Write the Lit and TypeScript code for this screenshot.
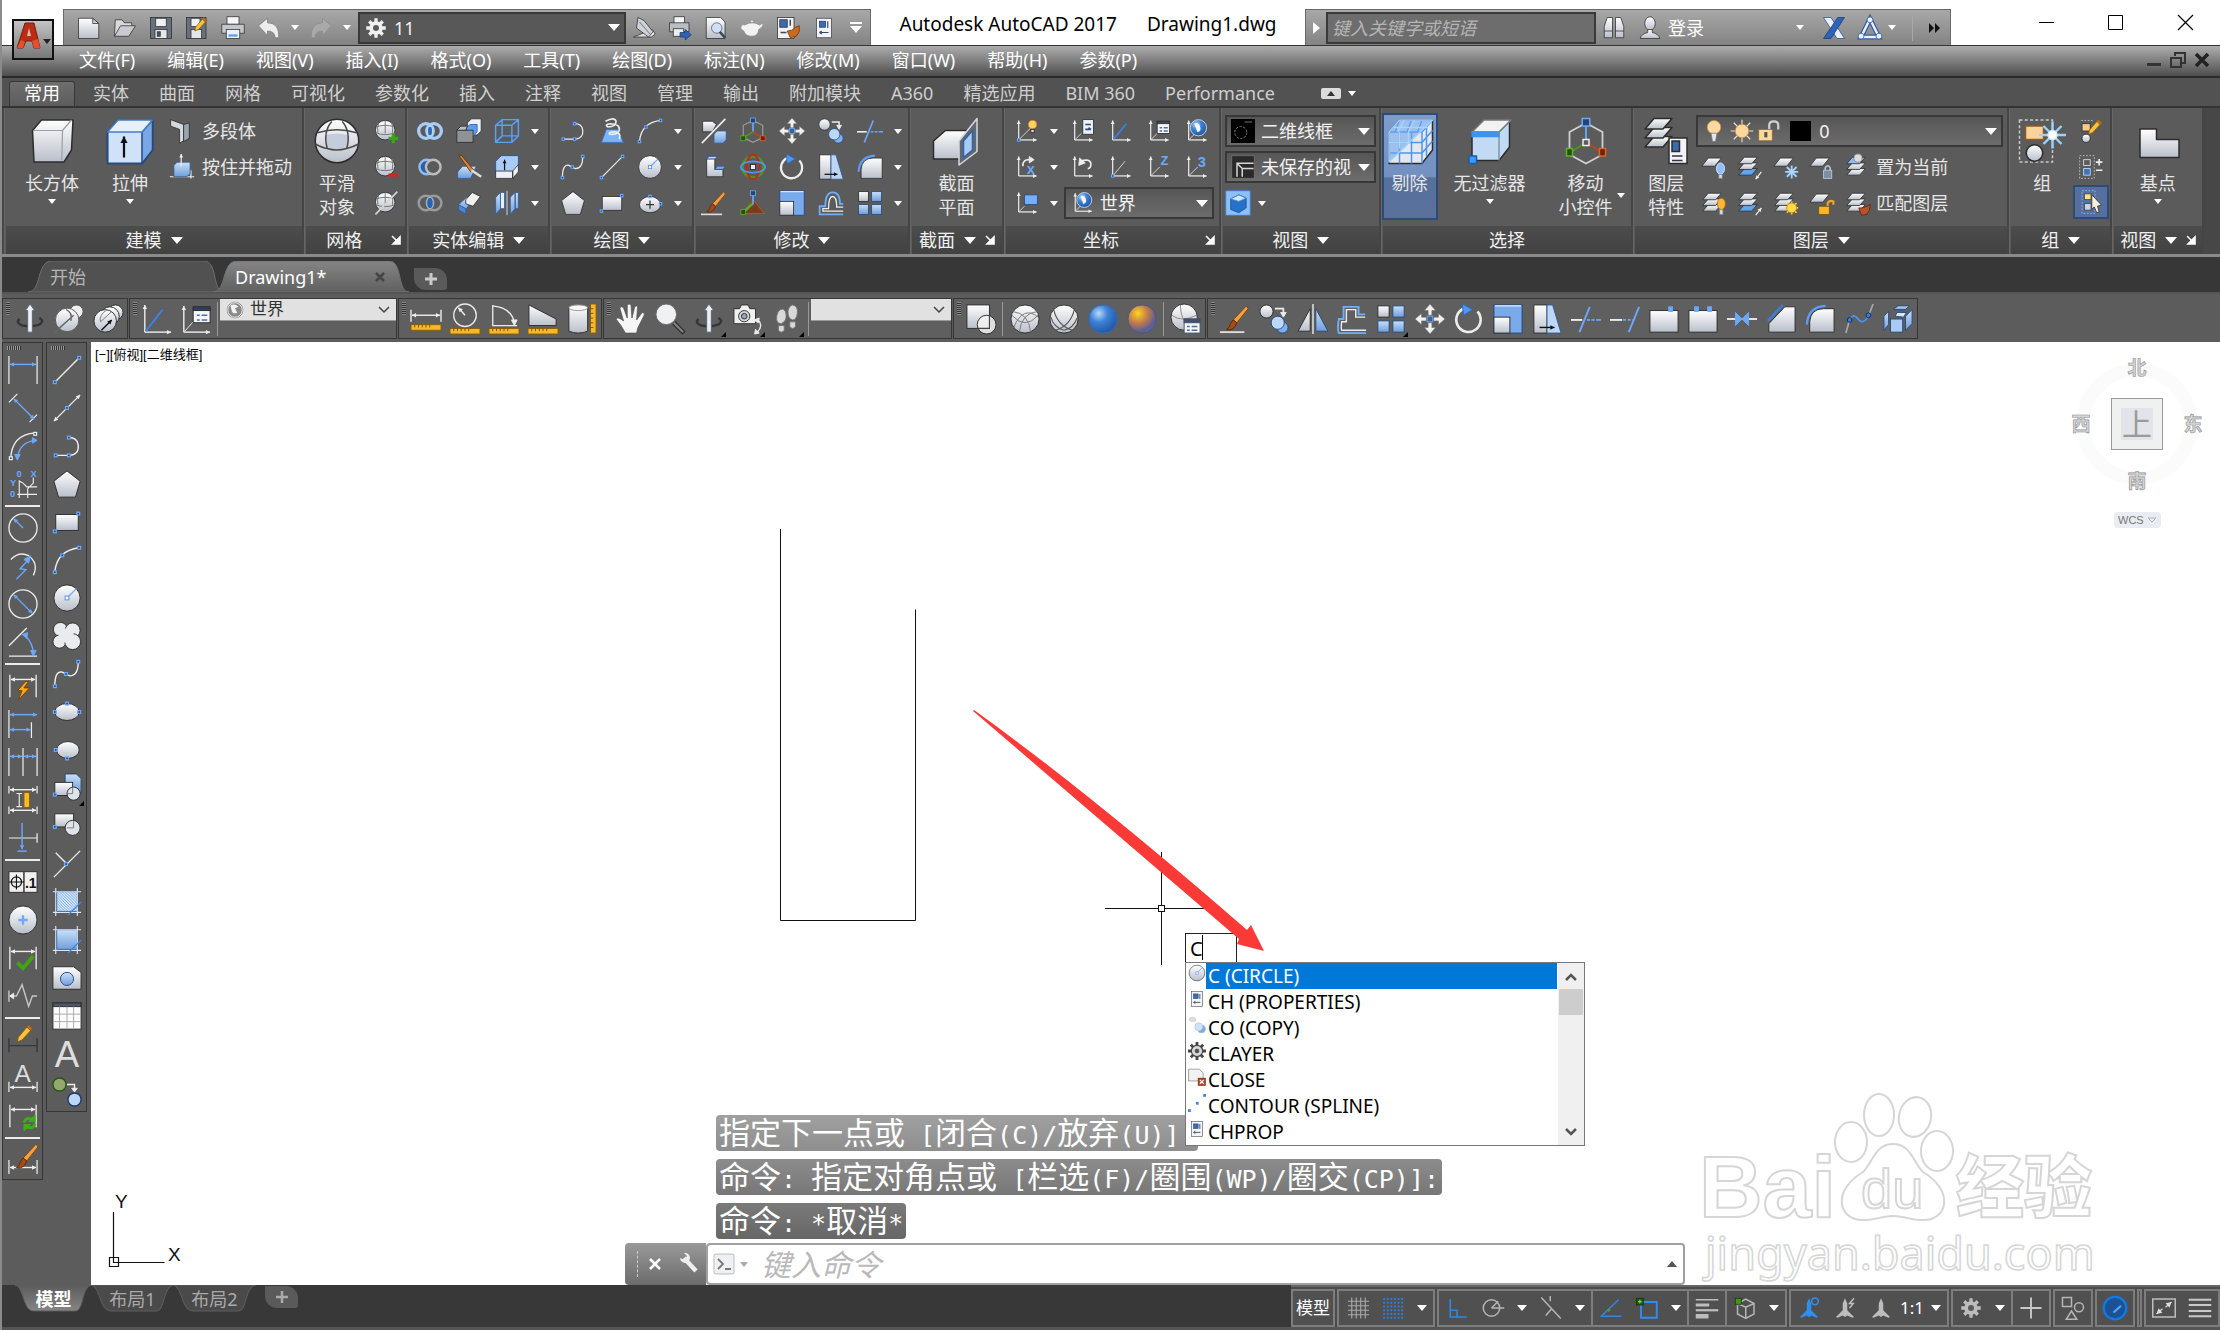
import { LitElement, html, svg, css, nothing } from "lit";
import type { SVGTemplateResult, TemplateResult } from "lit";
import { customElement, state } from "lit/decorators.js";
import { classMap } from "lit/directives/class-map.js";

/* ---------- drawing helpers (icons use a 32 x 32 grid) ---------- */
const W = "url(#gw)";
const B = "url(#gb)";
const K = "#2c2c2c";
const BL = "#6aa9ff";
const LT = "#ededed";
type S = SVGTemplateResult;

const L = (d: string, c = LT, w = 1.5): S =>
  svg`<path d=${d} fill="none" stroke=${c} stroke-width=${w}/>`;
const F = (d: string, f: string = W, s: string = K, w = 1): S =>
  svg`<path d=${d} fill=${f} stroke=${s} stroke-width=${w} stroke-linejoin="round"/>`;
const R = (x: number, y: number, w: number, h: number, f: string = W, s: string = K): S =>
  svg`<rect x=${x} y=${y} width=${w} height=${h} fill=${f} stroke=${s}/>`;
const C = (x: number, y: number, r: number, f: string = W, s: string = K, w = 1): S =>
  svg`<circle cx=${x} cy=${y} r=${r} fill=${f} stroke=${s} stroke-width=${w}/>`;
const E = (x: number, y: number, rx: number, ry: number, f: string = W, s: string = K): S =>
  svg`<ellipse cx=${x} cy=${y} rx=${rx} ry=${ry} fill=${f} stroke=${s}/>`;
const N = (x: number, y: number, c = BL): S =>
  svg`<rect x=${x - 1.5} y=${y - 1.5} width="3" height="3" fill="#23456f" stroke=${c} stroke-width="1.3"/>`;
const T = (x: number, y: number, t: string, size: number, c = BL, weight = 700): S =>
  svg`<text x=${x} y=${y} font-size=${size} fill=${c} font-family="Liberation Sans, sans-serif" font-weight=${weight}>${t}</text>`;
const A = (x1: number, y1: number, x2: number, y2: number, c = BL, both = true, s = 5): S => {
  const head = (x: number, y: number, t: number) =>
    `M${x} ${y}L${x - s * Math.cos(t - 0.5)} ${y - s * Math.sin(t - 0.5)}L${x - s * Math.cos(t + 0.5)} ${y - s * Math.sin(t + 0.5)}Z`;
  const a = Math.atan2(y2 - y1, x2 - x1);
  return svg`<path d=${`M${x1} ${y1}L${x2} ${y2}`} stroke=${c} stroke-width="1.5"/><path fill=${c} d=${head(x2, y2, a) + (both ? head(x1, y1, a + Math.PI) : "")}/>`;
};
const page = "M6 3h14l6 6v20h-20z";
const axes = svg`${A(7, 27, 7, 3, LT, false)}${A(7, 27, 29, 27, LT, false)}`;
const globe = (x: number, y: number, r: number): S => svg`${C(x, y, r, "url(#gs)", "#dfe8f5")}
  <path d=${`M${x - r / 2} ${y - r / 2}q${r / 2} ${-r / 4} ${r * 0.7} ${r / 3}t${-r / 3} ${r * 0.7}z`} fill="#f4f6f8"/>`;
const mesh = svg`${C(15, 15, 12)}${L("M15 3v16M7 6q-2 6-1 12M23 6q2 6 1 12M4 11q11-4 22 0M3 18q12 5 24 0", "#6c6c6c", 1.1)}`;
const brush = svg`${F("M28 2l2 3-12 15-4-3z", "#f0a040", "#7a4312")}${F("M14 17l4 3-2 4q-4 5-9 3 4-2 4-6z", "#a84a14", "#5a2808")}`;
const pencil = svg`${F("M25 2l4 4-11 12-5 2 1-5z", "#f7c33c", "#8a5a10")}${F("M25 2l4 4-2 2-4-4z", "#c9682a", "#8a5a10")}`;
const hdim = svg`${L("M2 4v24M30 4v24", LT, 1.4)}${A(3, 9, 29, 9, LT)}`;
const prop = svg`${R(6, 3, 20, 26, "#f2f4f7", "#3c4048")}${R(10, 7, 8, 8, "#3b6ab0", "#1d3d75")}${L("M21 7v9M10 22h12M10 22l3-2M10 22l3 2", "#3a4a5e", 1.6)}`;
const ruler = (x: number, y: number, w: number) => svg`${R(x, y, w, 6, "#f4b92f", "#8a5c00")}${L(`M${x + 4} ${y}v3M${x + 8} ${y}v3M${x + 12} ${y}v3M${x + 16} ${y}v3M${x + 20} ${y}v3`, "#7a5000", 1)}`;
const sheets = (top: string, bot: string) => svg`${F("M9 18h16l-7 8h-16z", bot)}${F("M9 11h16l-7 8h-16z", W)}${F("M9 4h16l-7 8h-16z", top)}`;
const sheet = F("M9 5h16l-8 10h-16z");
const gear = (f: string) => svg`<g stroke=${f} stroke-width="4.4"><path d="M16 3v26M3 16h26M7 7l18 18M25 7l-18 18"/></g>
  <circle cx="16" cy="16" r="9" fill=${f}/><circle cx="16" cy="16" r="4" fill="#5a5a5a"/>`;
const cube = (f: string) => svg`${F("M4 10l8-7h17v17l-7 9h-18z", f)}${L("M4 10h18v19M22 10l7-7", "#8292a6", 1)}`;
const orbit = svg`${L("M5 16q-5 4 3 7 9 2 18-1 6-4 0-7", "#32373e", 2.6)}${F("M16 0l5 7h-2.500v23h-5v-23h-2.500z", "#eceff5", "#596270")}`;
const person = (f: string) => svg`<path fill=${f} d="M16 3l3 7 0 9 9 9-2 1-7-3-3 2-3-2-7 3-2-1 9-9 0-9z"/>`;

const I: Record<string, S> = {
  new: svg`${F("M2 3h19l8 7v20h-27z")}${F("M21 3l8 7h-8z", "#cfd3d8")}`,
  open: svg`${F("M2 27l1-22h9l3 4h10v5", "#dadada")}${F("M2 27l8-14h20l-9 14z", "#c8ccd0")}`,
  save: svg`${R(2, 2, 28, 28, "#69717f")}${R(9, 3, 14, 11, "#eef0f2")}${R(8, 18, 16, 12, "#e4e6ea")}${R(11, 21, 4, 6, "#4b5464")}`,
  saveas: svg`${R(2, 2, 26, 28, "#69717f")}${R(8, 3, 12, 11, "#eef0f2")}${R(8, 18, 14, 12, "#e4e6ea")}${pencil}`,
  plot: svg`${R(8, 1, 16, 10, "#f6f6f6")}${F("M1 11h30v12h-30z", "#c4c8ce")}${R(7, 18, 18, 12, "#e9f1fb")}${L("M10 26h12", "#5d9be8", 3)}`,
  publish: svg`${R(8, 1, 14, 10, "#f6f6f6")}${F("M2 9h26v12h-26z", "#b9bdc4")}${R(7, 17, 14, 10, "#eee")}${F("M16 22h7v-4l8 7-8 7v-4h-7z", "#2f62b4", "#173c78")}`,
  undo: svg`${F("M2 13l12-10v6q16 0 15 20h-5q0-9-10-9v6z", "#ededed", "#777")}`,
  redo: svg`${F("M30 13l-12-10v6q-16 0-15 20h5q0-9 10-9v6z", "#a9a9a9", "#8a8a8a")}`,
  gear: gear("#f0f0f0"),
  sheetset: svg`${F("M2 28h24l5-4-4-6z", "#e2e2e2")}${F("M8 2l8 4 12 15-6 7-16-12z", "#cfd3d8")}${L("M10 8l14 16", "#7d838c", 1.5)}`,
  preview: svg`${F("M3 2h19l6 6v22h-25z")}${C(17, 16, 7, "#cfe0f6", "#556")}${L("M21 21l7 8", "#3d4755", 3.5)}`,
  teapot: svg`${F("M6 12q11-6 20 0l5-3q1 5-6 9-1 9-9 9-9 0-11-7-6-3-3-7 2-3 4-1z", "#f2f2f2", "#888")}${C(16, 7, 2, "#eee", "#888")}`,
  match: svg`${R(2, 2, 22, 28, "#f0f2f5")}${R(5, 5, 10, 10, "#3b6ab0")}${L("M6 22h8M19 5v8", "#445", 2)}${F("M31 13l-5 2-5 4-6 1 4 9 8-2 4-6z", "#c96a1c", "#6e3006")}`,
  prop,
  binoc: svg`${F("M3 29v-15l4-12h7v27z")}${F("M29 29v-15l-4-12h-7v27z")}${L("M3 20h11M18 20h11", K, 1)}`,
  user: svg`${E(16, 10, 7, 9)}${F("M3 30q1-6 10-8v-4h6v4q9 2 10 8z")}`,
  xch: svg`${F("M2 2h10l18 28h-10z", "#e8effa", "#2a4f8c")}${F("M30 2h-9l-19 28h10z", "#2f63b8", "#1c3c74")}`,
  a360: svg`${L("M16 5l11 22h-22z", "#2f5da8", 6)}${L("M16 5l11 22h-22z", "#eaf1fb", 3)}${C(16, 6, 3.6, "#eaf1fb", "#2f5da8")}${C(5, 26, 3.6, "#eaf1fb", "#2f5da8")}${C(27, 26, 3.6, "#eaf1fb", "#2f5da8")}`,

  box: svg`${F("M3 9l6-7h21l-1 20-5 8h-20z", W)}${L("M4 9h19l-.5 20M23 9l6-7", "#9aa0a8", 0.8)}`,
  extrude: svg`${F("M1 10l7-8h23v20l-7 9h-23z", "#cfe2f8", "#274a80", 1.4)}${F("M24 10l7-8v20l-7 9z", "#7aa8e4", "#274a80")}${F("M1 10l7-8h23l-7 8z", "#e6f1fd", "#4a7cc0")}${A(12, 27, 12, 13, "#111", false)}`,
  polysolid: svg`${F("M2 2l16 6v20l-5 3v-17l-11-4z", "#d5d9de")}${F("M18 8l7-2v19l-7 4z", "#9aa4b1")}`,
  presspull: svg`${L("M1 28h30M27 20v10", LT)}${F("M6 14l4-4h16v14l-4 4h-16z", B, "#34578c")}${A(15, 15, 15, 0, LT, false)}`,
  smooth: svg`${C(16, 16, 14.500)}${F("M8.500 12q7-2 15 0l-1 9q-6 2-13 0z", "#c4cddb", "none")}${L("M3 10.500q13-4 26 0M1.500 18q6 3 8 3 6 2 13 0 4-1 8-3M9.500 21q-3-11 3-18M22.500 21q3-11-3-18", "#4a4a4a", 1)}`,
  meshplus: svg`${mesh}${L("M25 19v12M19 25h12", "#3aa60c", 4)}`,
  meshminus: svg`${mesh}${L("M19 26h12", "#cc2a1c", 4)}`,
  meshslash: svg`${mesh}${L("M3 30l27-28", "#d5d5d5", 2)}`,
  union: svg`${C(11, 16, 9, "none", "#a9cdfb", 4)}${C(21, 16, 9, "none", "#a9cdfb", 4)}${E(16, 16, 3, 6, "#2a68b8", "#dcebff")}`,
  subtract: svg`${C(12, 16, 9, "#2c5f9f", "#8ebcf5", 3)}${C(20, 16, 9, "#5b5b5b", "#bcbcbc", 3)}`,
  intersect: svg`${C(11, 16, 9, "none", "#9a9a9a", 3)}${C(21, 16, 9, "none", "#9a9a9a", 3)}${E(16, 16, 4, 7, "#2c64ac", "#9ac4fa")}`,
  extrudeface: svg`${F("M14 6l5-5h12v15l-5 5h-12z", "#eef1f5")}${F("M12 13l5-5h9v9l-5 6z", "#5c9cf0", "#2b5fae")}${F("M1 15h20v15h-20z", "#8f9296")}${F("M1 15l5-5h8l-2 5z", "#b9bcc0")}`,
  slice: svg`${F("M2 22l6-7h17l-7 15h-16z", B, "#2f5a98")}${F("M3 1l4 1 15 18-4 2z", "#d98538", "#5f3008")}${L("M19 20l12 8", "#ddd", 3)}`,
  sep: svg`${F("M3 18l10-9 8 3-9 12z", B, "#2f5a98")}${F("M12 12l8-9 10 5-9 12-9-3z", "#f0f0f0")}${F("M3 18l9 5v7l-9-6z", "#4d86d4", "#2f5a98")}`,
  wirebox: svg`${L("M2 9l8-7h20v20l-8 8h-20zM2 9h20v21M22 9l8-7M10 2v20h20M10 22l-8 8", "#5aa0f8", 1.8)}`,
  upbox: svg`${F("M2 9l7-7h21v16l-7 9h-21z", "#a9ccf7", "#24508f")}${F("M2 21h21v9h-21zM23 21l7-8v9l-7 8z", "#eef1f5")}${A(13, 20, 13, 7, "#111", false)}`,
  mirror3: svg`${F("M2 9l6-6v20l-6 7z", B, "#2f5a98")}${F("M8 3h5v20h-5z", "#e2effd", "#2f5a98")}${F("M20 9l6-6v20l-6 7zM26 3h4v20h-4z", B, "#2f5a98")}${L("M16 1v30", LT, 1)}`,

  pline: svg`${L("M5 26h14M19 26q10-1 9-11-1-8-10-8", LT)}${N(4, 26)}${N(18, 26)}${N(18, 7)}`,
  helix: svg`${F("M9 14h14l7 16h-27z", "#7db3f8", "#3a70b8")}${L("M8 4q11-6 13 0 0 7-10 7-5-3 3-4 12 0 11 8-2 6-12 5-2-3 6-3 9 1 6 9", LT, 2)}`,
  arc: svg`${L("M3 29q2-23 26-26", LT)}${N(3, 29)}${N(11, 11)}${N(29, 3)}`,
  spline: svg`${L("M3 29q0-17 8-15 5 3 8 4 9 0 9-15", LT)}${N(3, 29)}${N(15, 16)}${N(28, 3)}`,
  line: svg`${L("M3 29l26-26", LT)}${N(3, 29)}${N(29, 3)}`,
  circle: svg`${C(16, 16, 14)}${L("M16 16l10-10", BL, 1.4)}<rect x="14" y="14" width="4" height="4" fill="#fff" stroke="#4a90ee"/>`,
  polygon: F("M16 2l14 11-5 17h-18l-5-17z"),
  rect: svg`${R(4, 8, 24, 17)}${N(3, 26)}${N(28, 7)}`,
  ellipse: svg`${E(16, 16, 13, 9)}${N(16, 7)}${N(3, 16)}${N(29, 16)}`,
  ellipse2: svg`${E(17, 16, 12, 9)}${N(4, 16)}${N(16, 25)}`,
  ellipsec: svg`${E(16, 18, 13, 10)}${L("M16 13v10M11 18h10", "#333", 1.500)}${N(16, 8)}${N(29, 17)}`,
  xline: svg`${A(2, 30, 30, 2, LT)}${N(16, 16)}`,
  cloud: svg`<g fill="#e9ebef"><circle cx="9" cy="9" r="7.500" stroke="#2c2c2c"/><circle cx="22" cy="10" r="8" stroke="#2c2c2c"/><circle cx="8" cy="22" r="7" stroke="#2c2c2c"/><circle cx="22" cy="22" r="8.500" stroke="#2c2c2c"/><rect x="7" y="8" width="16" height="15"/></g>`,
  copyblk: svg`${F("M14 1h12l5 5v15h-17z", B, "#2c4870")}${R(3, 10, 19, 14)}${C(23, 22, 7, "#dfe3ea")}${L("M22 15v7h-6", "#777", 1)}${N(3, 23)}`,
  block: svg`${R(3, 3, 20, 14)}${C(22, 18, 8, "#dfe3ea")}${L("M23 11v7h-7", "#777", 1)}${N(3, 17)}`,
  point: svg`${L("M2 30l28-28M4 4l12 12", LT)}${N(15, 16)}`,
  hatch: svg`${R(5, 5, 22, 21, "url(#gh)", "#23477c")}${L("M1 5h30M1 27h30M4 1v30M27 1v30", "#d8e6fa", 1.200)}${L("M17 30l14-14", "#3f86e6", 1.500)}`,
  gradient: svg`${R(5, 5, 22, 21, B, "#23477c")}${L("M1 5h30M1 27h30M4 1v30M27 1v30", "#d8e6fa", 1.200)}${L("M17 30l14-14", "#3f86e6", 1.500)}`,
  region: svg`${F("M1 4h22l8 6v18h-30z")}${C(16, 17, 7, B, "#2a4c80")}`,
  table: svg`${R(1, 2, 30, 28, "#fbfbfb")}${R(1, 2, 30, 4, "#4e5666")}${L("M8 6v24M16 6v24M23 6v24M1 14h30M1 22h30", "#a9a9a9", 1)}`,
  mtext: T(3, 30, "A", 39, "#dedede", 400),
  addsel: svg`${C(8, 8, 7, "#93a86c", "#2d5416", 1.500)}${C(24, 24, 7, "#bcd6f6", "#1d3c70", 1.500)}${L("M16 8h8v5", LT, 1.500)}${F("M21 12h6l-3 4z", LT, LT)}`,

  lindim: svg`${L("M1 1v30M31 1v30", LT, 1.300)}${A(2, 10, 30, 10)}`,
  aligned: svg`${L("M1 10l9-9M23 31l8-8", LT, 1.300)}${A(6, 6, 28, 28)}`,
  arclen: svg`${L("M3 29q1-25 26-27", LT, 1.500)}${L("M10 29q2-17 19-19", BL, 1.500)}${F("M7 25h6l-3 6zM26 7l5 3-5 3z", BL, BL)}${N(3, 29, LT)}${N(29, 3, LT)}`,
  ordinate: svg`${T(9, 9, "0", 10)}${T(24, 9, "X", 10)}${T(2, 18, "Y", 10)}${T(2, 30, "0", 10)}${L("M12 12v19M10 27h21M12 13q4 1 8 6h11M21 31v-10l6-6v-6", LT, 1.200)}`,
  radius: svg`${C(16, 16, 15, "none", LT, 1.400)}${A(16, 16, 6, 6, BL, false)}`,
  jogged: svg`${L("M3 9q9-9 19-4 11 8 5 21", LT, 1.400)}${L("M9 30l10-10-6-1 8-9", BL, 1.500)}${F("M24 5l-2 8-5-4z", BL, BL)}`,
  diameter: svg`${C(16, 16, 15, "none", LT, 1.400)}${A(6, 6, 26, 26)}`,
  angular: svg`${L("M1 20l19-19M1 31h30", LT, 1.400)}${L("M18 9q9 8 9 20", BL, 1.500)}${F("M15 8l6-2-1 6zM24 25h6l-3 6z", BL, BL)}`,
  qdim: svg`${hdim}${F("M19 11l-9 10h5l-4 10 12-13h-6l5-7z", "#f8a81c", "#7a3c00")}`,
  baseline: svg`${L("M1 1v30M25 14v17", LT, 1.300)}${A(2, 6, 31, 6)}${A(2, 22, 24, 22)}`,
  contdim: svg`${L("M1 1v30M16 1v30M31 1v30", LT, 1.300)}${A(2, 10, 15, 10)}${A(17, 10, 30, 10)}`,
  dimspace: svg`${L("M1 1v8M31 1v8M1 23v8M31 23v8", LT, 1.300)}${A(2, 5, 30, 5, LT)}${A(2, 27, 30, 27, LT)}${R(17, 8, 6, 16, "#f4b92f", "#8a5c00")}${L("M12 9v14M9 9h6M9 23h6", LT, 1.200)}`,
  dimbreak: svg`${L("M1 16h30M31 11v10", LT, 1.300)}${A(15, 0, 15, 28, BL, false)}${L("M10 30h10", BL, 1.500)}`,
  tol: svg`${R(1, 5, 30, 22, "#f0f0f0")}${L("M17 5v22", K, 1.500)}${C(9, 16, 5.500, "none", "#111", 1.300)}${L("M1 16h16M9 8v16", "#111", 1.200)}${T(18, 22, ".1", 15, "#111")}`,
  center: svg`${C(16, 16, 15)}${L("M16 11v10M11 16h10", "#6ea8f8", 2.500)}`,
  inspect: svg`${hdim}${L("M10 21l6 6 11-13", "#3fa514", 4)}`,
  jogline: svg`${L("M1 10v12M2 16h7l6-12 7 23 4-11h5", "#c6c6c6", 1.500)}${F("M2 16l4-3v6z", LT, LT)}`,
  dimedit: svg`${L("M1 14v15M31 14v15M1 22h30", "#35383d", 1.500)}<g transform="translate(-3 -2)">${pencil}</g>`,
  dimtext: svg`${L("M1 20v11M31 20v11", LT, 1.300)}${A(2, 26, 30, 26, LT)}${T(7, 20, "A", 26, "#dcdcdc", 400)}`,
  dimupd: svg`${hdim}${L("M17 23q2-6 8-4l3 1M29 24q-2 6-8 4l-3-1", "#3fae14", 3)}${F("M29 15v7h-7zM17 32v-7h7z", "#3fae14", "#3fae14")}`,
  dimstyle: svg`${L("M1 16v15M31 16v15", LT, 1.300)}${A(2, 24, 30, 24, LT)}<g transform="translate(2 -3)">${brush}</g>`,

  align3: svg`${F("M2 4h12l5 4-5 9h-12z")}${F("M16 20l4-4h11v11l-4 4h-11z", B, "#2f5a98")}${L("M1 31l29-30", LT, 2)}`,
  gizmo: svg`${L("M16 3l12 6v15l-12 6-12-6v-15z", "#9a9a9a", 1.500)}${L("M16 4v13", BL, 2)}${L("M16 17l11 7", "#c0451b", 2)}${L("M16 17l-11 7", "#4a9a1a", 2)}${R(13, 0, 6, 6, "#23456f", BL)}${R(1, 22, 6, 6, "#27500d", "#5ab32a")}${R(25, 22, 6, 6, "#6a2207", "#e0622a")}`,
  gizmorot: svg`${C(16, 16, 13, "none", "#4a9a1a", 3)}${svg`<ellipse cx="16" cy="16" rx="8" ry="15" fill="none" stroke="#c0281b" stroke-width="2.500"/><ellipse cx="16" cy="16" rx="15" ry="7" fill="none" stroke="#4f97f5" stroke-width="2"/>`}${R(13, 13, 6, 6, "#eee", "#222")}`,
  gizmoscale: svg`${F("M16 12l14 17h-28z", "#7b3a22", "#c05a2a")}${L("M16 4v13l-12 10", BL, 2)}${L("M4 28l11-11", "#4ab31a", 3)}${R(13, 1, 6, 6, "#23456f", BL)}${R(1, 24, 6, 6, "#27500d", "#5ab32a")}`,
  move: svg`${F("M16 0l6 7h-4v5h-4v-5h-4zM16 32l6-7h-4v-5h-4v5h-4zM0 16l7-6v4h5v4h-5v4zM32 16l-7-6v4h-5v4h5v4z", "#f0f0f0", "#6a6a6a", 0.600)}${R(13, 13, 6, 6, "#48617f", BL)}`,
  copy: svg`${C(8, 8, 7)}${L("M17 5h9v5", LT, 1.800)}${F("M23 9h6l-3 5z", LT, LT)}${C(25, 25, 6, "#7fb0ee", "#26487c")}${C(20, 20, 7, "#bcd8f8", "#26487c")}`,
  trim: svg`${L("M0 17h12", LT, 2)}${L("M9 30l11-27", BL, 2)}${L("M17 17h15", BL, 1.800)}<path d="M21 15v4M26 15v4" stroke="#5b5b5b" stroke-width="1.500"/>`,
  extend: svg`${L("M0 17h13", LT, 2)}${L("M20 30l11-27", BL, 2)}${L("M14 17h3M19 17h3M24 17h2", BL, 1.800)}`,
  solidL: svg`${F("M7 6h10v13h10v9h-20z", W)}${F("M17 19h10l3-4h-10zM7 6l3-3h10l-3 3z", B, "#2f5a98")}`,
  rotate: svg`${L("M10 5a13 13 0 1 0 15 3", LT, 2.800)}${F("M9 0l11 6-10 6z", "#4f97f5", "#2c68b8")}`,
  stretch: svg`${F("M2 1h14v30h-14z", W)}${F("M16 1h6l9 30h-15z", "#bcd6f4", "#2f5a98")}${A(8, 25, 24, 25, "#111", false)}`,
  fillet: svg`${F("M5 30v-11q1-14 15-14h11v25z")}${L("M2 22q1-19 20-20", "#5d9df5", 2.500)}`,
  chamfer: svg`${F("M3 30v-9l17-18h11v27z")}${L("M2 18l16-17", "#3c7fe0", 2.500)}`,
  brush: svg`${L("M0 30h26", "#ddd", 2)}${brush}`,
  scale: svg`${R(1, 1, 30, 30, "#78aaec", "#25477c")}${R(1, 14, 17, 17, W)}${L("M2 2h28", "#d5e6fa", 1.500)}`,
  offset: svg`${L("M31 30h-29v-10h7q0-17 9-17t9 14h4", "#6faefc", 2.200)}${L("M31 26h-25v-3h7q0-15 5-15t5 13h8", LT, 1.600)}`,
  offset2: svg`${L("M31 31h-29q-2-4 0-15h5v-13h16v8h7", "#6faefc", 2)}${L("M31 28h-26q-1-2 0-9h5v-13h10v8h10", LT, 1.500)}`,
  array: svg`${R(2, 2, 12, 12, W)}${R(18, 2, 12, 12, B, "#2b4a78")}${R(2, 18, 12, 12, B, "#2b4a78")}${R(18, 18, 12, 12, B, "#2b4a78")}`,
  mirror: svg`${F("M13 5v24h-13z", W)}${F("M19 5v24h13z", B, "#2b4a78")}${L("M16 0v32", LT, 1.500)}`,
  breakpt: svg`${R(1, 7, 30, 23)}${R(21, 3, 4, 5, BL, BL)}`,
  brk: svg`${R(1, 7, 30, 23)}${R(7, 3, 4, 5, BL, BL)}${R(21, 3, 4, 5, BL, BL)}`,
  join: svg`${L("M0 16h32", LT, 2)}${F("M9 9l7 7-7 7zM23 9l-7 7 7 7z", "#6ba8f8", "#6ba8f8")}`,
  blend: svg`${L("M2 31l4-14M26 13l5-13", "#a9a9a9", 1.800)}${L("M6 17q4-8 9-1t11-3", "#4c94f2", 1.800)}${C(6, 17, 2.500, "#2f86e8", "#0c2a50")}${C(26, 12, 2.500, "#2f86e8", "#0c2a50")}`,
  explode: svg`${F("M12 5l4-3h12l-4 4h-12z", B, "#294a7c")}${F("M1 13l5-5v14l-5 6z", B, "#294a7c")}${R(8, 16, 13, 14, "#a9cbf3", "#294a7c")}${F("M24 13l7-7v15l-7 7z", B, "#294a7c")}${F("M13 13l2-4h10l-3 5z", "#d9e8fa", "#294a7c")}`,
  section: svg`${F("M1 16l8-7h18v13l-4 6h-22z", W)}${F("M18 16l12-15v22l-12 9z", "#5f6873", "#d5d9de")}${F("M21 16l6-7v13l-6 5z", "#a9cbf5", "#2f62a8")}`,

  ucs: svg`${axes}${L("M8 26l16-19", "#3a82e8", 2)}`,
  ucsnew: svg`${axes}${L("M8 26l14-14", LT, 1)}${N(7, 27)}${C(24, 8, 5, "#ffd264", "#e8861a")}${R(22, 14, 4, 4, "#ddd")}`,
  ucsprop: svg`${axes}${L("M8 26l7-7", LT, 1)}${R(17, 2, 13, 18, "#eef1f5")}${L("M20 8h7M20 14h7M27 14l-3-2", "#2f4e80", 2)}`,
  ucstable: svg`${axes}${L("M8 26l8-8", LT, 1)}${R(15, 4, 15, 15, "#f4f6f9")}${R(15, 4, 15, 3, "#3f4b63")}${L("M18 12h3M23 12h5M18 16h3M23 16h5", "#4f6ea4", 1.600)}`,
  ucsglobe: svg`${axes}${L("M8 26l8-8", LT, 1)}${globe(19, 12, 10)}`,
  ucsx: svg`${axes}${L("M12 15q0-9 9-8", LT, 2)}${F("M20 3l6 4-6 4z", LT, LT)}${T(17, 25, "x", 18)}`,
  ucsback: svg`${axes}${L("M14 9q12-4 13 3 0 6-4 6", LT, 2)}${F("M13 5l-1 9 8-3z", LT, LT)}`,
  ucsorig: svg`${axes}${L("M8 26l14-17", LT, 1)}${N(7, 27)}`,
  ucsz: svg`${axes}${L("M8 26l10-10", LT, 1)}${T(19, 14, "Z", 16)}`,
  ucs3: svg`${axes}${L("M8 26l10-10", LT, 1)}${T(18, 16, "3", 18)}`,
  ucsview: svg`${axes}${L("M8 26l6-6", LT, 1)}${R(14, 6, 16, 12, "#78aef5", "#25477c")}`,
  world: svg`${globe(16, 16, 13)}`,
  worldgray: svg`${C(16, 16, 14, "#8a8a8a", "#555")}<path d="M8 8q8-4 14 2l-6 3 4 8q-8 4-10-4z" fill="#f2f2f2"/>${C(16, 16, 13, "none", "#fff", 1.500)}`,
  wire: svg`<rect width="32" height="32" fill="#000"/><circle cx="13" cy="18" r="8" fill="none" stroke="#aaa" stroke-dasharray="3 2"/>${L("M18 4h10", "#999", 1)}`,
  saved: svg`<rect x="1" y="1" width="30" height="30" fill="#2a2a2a" stroke="#777"/>${L("M8 29v-18h22M15 29v-11h15M8 11l7 7", "#d5d5d5", 2)}`,
  viewcube: svg`${R(1, 1, 30, 30, "#8cc0fb", "#3f7fd0")}${F("M7 11l10-5 9 4v12l-9 6-10-4z", "#2672c8", "#1b4f94")}${F("M7 11l10-5 9 4-9 4z", "#cfe6ff", "#3f7fd0")}`,

  cull: svg`${F("M2 10l7-8h22v20l-7 9h-22z", "#e4e8ee")}${L("M2 10h22v21M24 10l7-8M9 10v21M17 10v21M2 17h22M2 24h22M27 6v20M9 2l-3 8M17 2l-3 8M24 2l-3 8M24 17l7-8M24 24l7-8", "#4f95ea", 1)}${F("M2 10l7-8h22l-29 28z", "rgba(110,165,235,.6)", "#9fd0ff")}${L("M5 7h23M9 10v11M15 10v7M2 17h14M12 2l-4 8M19 2l-4 8", "#a9d4ff", 1)}`,
  nofilter: svg`${cube("#c3daf4")}${F("M4 10l8-8h18l-8 8z", "#f2f2f2", "#777")}${R(4, 10, 18, 3, "#3f92f2", "#3f92f2")}${R(2, 26, 5, 5, "#3d9bff", "#1b5ca8")}`,
  movegiz: svg`${L("M16 4l11 6v15l-11 6-11-6v-15z", "#d0d0d0", 1.200)}${L("M16 5v12", BL, 1.200)}${L("M16 17l11 7", "#c0451b", 1.200)}${L("M16 17l-11 7", "#4a9a1a", 1.200)}${R(13.500, 1, 5, 5, "#23456f", BL)}${R(14, 15, 4, 4, "#5b5b5b", "#eee")}${R(3, 21, 4, 5, "#27500d", "#5ab32a")}${R(25, 21, 4, 5, "#6a2207", "#e0622a")}`,
  layerprop: svg`${F("M8 13h12l-6 7h-12z")}${F("M8 7h12l-6 7h-12z")}${F("M8 1h12l-6 7h-12z")}${R(18, 14, 12, 17, "#f2f4f7")}${R(20, 16, 5, 7, "#3b6ab0")}${L("M20 26h7M20 29h7", "#334", 1)}`,
  bulb: svg`${C(16, 11, 9, "#ffd9a0", "#c98a4a")}${F("M12 19h8l-2 11h-4z", "#e3e6ea", "#777")}`,
  sun: svg`${L("M16 1v30M1 16h30M5 5l22 22M27 5l-22 22", "#e8e2d2", 1.500)}${C(16, 16, 9, "#ffd79a", "#c98a4a")}`,
  lock: svg`${L("M15 14v-6q0-5 6-5t6 5v6", "#cfcfcf", 3)}${R(1, 14, 18, 15, "#fbd99a", "#8a6a32")}${R(9, 18, 3, 6, "#555", "#555")}`,
  layoff: svg`${sheet}${E(24, 18, 5, 7, "#8fc0fb", "#dfeeff")}${R(22, 25, 4, 5, "#ddd", "#888")}`,
  layiso: svg`${sheets(W, "#5fa4f5")}${A(30, 22, 23, 31, LT, false)}`,
  layfrz: svg`${sheet}${L("M23 14v16M15 22h16M17 16l12 12M29 16l-12 12", "#a9d2ff", 2.200)}`,
  laylck: svg`${sheet}${L("M20 20v-3q3-5 6 0v3", "#b8c2d0", 2)}${R(18, 20, 10, 10, "#7d8ea6", "#c3cedd")}`,
  laycur: svg`${sheets("#8cbcf5", W)}${C(16, 5, 5, "#ddd", "#888")}`,
  layon: svg`${sheets(W, W)}${E(25, 17, 5, 7, "#ffb53a", "#b86a08")}${R(23, 24, 4, 6, "#ddd", "#888")}`,
  layuniso: svg`${sheets(W, "#5fa4f5")}${A(23, 31, 30, 22, LT, false)}`,
  laythw: svg`${sheets(W, W)}${L("M23 14v16M15 22h16M17 16l12 12M29 16l-12 12", "#ffd23a", 2)}${C(23, 22, 6, "#ffd94a", "#c98a12")}`,
  layulk: svg`${sheet}${L("M23 21v-5q2-4 7-2v4", "#f5a623", 2.500)}${R(12, 20, 13, 10, "#f9b52c", "#7a5000")}`,
  laymch: svg`${sheets(W, W)}${F("M31 18l-4 2-6 2-4 0 3 9 7-1 3-5z", "#b5532c", "#5c2208")}`,
  group: svg`<rect x="1" y="2" width="22" height="28" fill="none" stroke="#c9c9c9" stroke-dasharray="2 1.500"/>${R(5, 6, 12, 9, "#fbd29a", "#8a5c22")}${C(11, 24, 5.500)}${L("M23 3v18M14 12h18M17 6l12 12M29 6l-12 12", "#9ad2ff", 1.600)}${C(23, 12, 3, "#fff", "#d2ecff")}`,
  grpedit: svg`<path d="M4 3h15" stroke="#ccc" stroke-dasharray="2 2"/>${R(5, 7, 10, 9, "#fbc98a")}${C(10, 25, 5)}${pencil}`,
  ungroup: svg`<rect x="2" y="2" width="18" height="28" fill="none" stroke="#ccc" stroke-dasharray="2 2"/>${R(7, 7, 8, 7, "none", "#eee")}${R(7, 18, 8, 8, "#3b74b8", "#cfe4ff")}${L("M22 10h8M26 6v8M22 20h8", LT, 2)}`,
  grpsel: svg`<rect x="5" y="2" width="16" height="28" fill="none" stroke="#8fc2ff" stroke-dasharray="2 2"/>${R(8, 6, 8, 7, "#ffe08a", "#444")}${R(8, 18, 8, 8, "#c6d4e6", "#444")}${F("M17 7l12 13-5 1 2 7-3 1-3-7-3 3z", "#fff0d8", "#333")}`,
  base: F("M4 8h11v7h15v12h-26z", W),

  swivel: svg`${orbit}`,
  walk: svg`${F("M9 6q5-2 6 5t-5 10q-6 0-5-8 1-6 4-7zM7 23h6v5q-3 4-6 0z", "#d9d9d9", "#777")}${F("M22 1q6 1 5 9-1 7-5 7-5-1-5-9 1-6 5-7zM19 19h6v5q-3 4-6 0z", "#d9d9d9", "#777")}`,
  spheres: svg`<g stroke="#555"><circle cx="24" cy="8" r="7" fill="#f0f0f0"/><circle cx="14" cy="17" r="12.500" fill="url(#gw)"/></g>${L("M1 30l20-18M13 6q7 3 5 12", "#666", 1.500)}`,
  spheres2: svg`${C(24, 9, 8)}${C(18, 13, 10)}${C(13, 18, 12)}${L("M15 6q-9 6-7 13l12-11", "#777", 1)}${A(9, 28, 20, 17, "#111", false)}`,
  ucsbar: svg`${A(3, 30, 3, 1, LT, false)}${A(3, 30, 31, 30, LT, false)}${L("M4 29l18-23", "#3a82e8", 2)}`,
  ucspanel: svg`${A(3, 30, 3, 2, LT, false)}${A(3, 30, 31, 30, LT, false)}${L("M4 29l9-10", LT, 1)}${R(13, 3, 18, 17, "#f4f6f9")}${R(13, 3, 18, 4, "#2f3f5c")}${L("M17 12h3M22 12h6M17 17h3M22 17h6", "#4f6ea4", 1.600)}`,
  mdist: svg`${L("M0 6v13M32 6v13", LT, 1.500)}${A(1, 12, 31, 12, LT)}${ruler(0, 22, 32)}`,
  mrad: svg`${C(16, 12, 12, "none", LT, 1.400)}${A(16, 12, 9, 4, LT, false)}${ruler(0, 26, 32)}`,
  mang: svg`${L("M4 1v22h26M4 2q20 2 23 18", LT, 1.400)}${F("M24 17h6l-3 6z", LT, LT)}${ruler(0, 26, 32)}`,
  marea: svg`${F("M1 1l29 15v7h-29z")}${ruler(0, 26, 32)}`,
  mvol: svg`${F("M2 4q10-5 20 0v25q-10 4-20 0z")}${E(12, 4, 10, 3, "#f8f8f8", "#999")}${R(25, 0, 6, 31, "#f4b92f", "#8a5c00")}${L("M25 5h3M25 10h3M25 15h3M25 20h3M25 25h3", "#7a5000", 1)}`,
  pan: svg`${F("M10 31q-4-8-10-15 2-3 8 2l-4-14q2-2 4 0l4 11v-14q2-2 4 0l1 14 3-12q2-2 3 0l-1 14 6-8q3 0 2 3l-7 14-1 5z", "#f6f6f6", "#555", .800)}`,
  zoom: svg`${L("M20 20l11 11", "#333", 5)}${L("M20 20l10 10", "#888", 2)}${C(12, 11, 11, "#f0f1f3", "#666")}`,
  camera: svg`${F("M1 5h6l2-4h7l2 4h6v16h-23z", "#f0f0f0")}${C(12, 13, 6, "#d5d9df")}${C(12, 13, 3, "#9aa4b2")}${L("M26 16q7 7 0 14", LT, 1.500)}${F("M22 17l6-2-1 5zM23 32l1-5 4 4z", LT, LT)}`,
  v2d: svg`${R(1, 1, 24, 25)}${C(22, 22, 10, "rgba(245,245,245,.85)")}${L("M25 12v14h-13", "#444", 1.200)}`,
  vwire: svg`${C(16, 16, 15)}${L("M2 12q14 16 28 0M4 25q10-24 26-11M3 8q17 2 19 22M29 8q-17 2-19 22", "#777", 1)}`,
  vhide: svg`${C(16, 16, 15)}${L("M5 6q4 17 20 22M27 6q-4 17-20 22M2 14q3 11 14 14 10-2 14-13", "#555", 1.200)}`,
  vreal: svg`${C(16, 16, 15, "url(#gs)", "#2b6cc0")}`,
  vconc: svg`${C(16, 16, 15, "url(#gc)", "#55507a")}`,
  vman: svg`${C(14, 14, 14)}${L("M1 12q10 8 26 0M10 1q0 16 10 24", "#888", 1)}${R(14, 16, 17, 15, "#f4f6f9", "#44506a")}${R(14, 16, 17, 4, "#44506a", "#44506a")}${L("M17 24h3M22 24h6M17 28h3M22 28h6", "#4f6ea4", 1.500)}`,

  close: svg`${F("M1 2h19l7 7v14h-26z", "#f2f2f2", "#666")}${R(18, 18, 13, 13, "#b3432a", "#6b1c0c")}${L("M21 21l7 7M28 21l-7 7", "#fff", 2)}`,
  geardark: svg`<g stroke="#444" stroke-width="5"><path d="M16 0v32M0 16h32M5 5l22 22M27 5l-22 22"/></g>${C(16, 16, 10, "#d9d9d9", "#444", 2)}${C(16, 16, 3.500, "#555", "#333")}`,
  splinedots: svg`<g fill="#3f86e6"><rect x="0" y="27" width="5" height="5"/><rect x="14" y="14" width="5" height="5"/><rect x="27" y="0" width="5" height="5"/></g>`,
  copylite: svg`${E(8, 6, 6, 4, "#dcdcdc", "#ccc")}${C(24, 23, 7, "#7ea8dc", "#a9c4e8")}${C(19, 19, 7, "#cfe2f8", "#a9c4e8")}`,

  grid: L("M9 2v28M15 2v28M21 2v28M27 2v28M4 7h28M4 13h28M4 19h28M4 25h28", "#a8a8a8", 1.500),
  snap: svg`<g stroke="#2f7de0" stroke-width="2.400" stroke-dasharray="2.400 2.400"><path d="M3 4h27M3 9h27M3 14h27M3 19h27M3 24h27M3 29h27"/></g>`,
  ortho: L("M7 4v24h22M7 19h9v9", "#2f86e8", 2.200),
  polar: svg`${C(14, 16, 11, "none", "#b5b5b5", 2)}${L("M14 16h17M14 16l9-9", "#b5b5b5", 2)}`,
  iso: svg`${L("M3 2l26 28M15 0v7M9 26l8-9", "#b5b5b5", 2)}`,
  otrack: svg`${L("M2 27h28M3 27l23-22", "#2f86e8", 2)}${C(13, 19, 1.500, "#4aa51c", "#4aa51c")}`,
  osnap: svg`${L("M8 8h21v21h-21z", "#2f8cf0", 2.500)}${R(2, 3, 9, 9, "#1c5a10", "#0c3006")}${L("M6.500 5v5M4 7.500h5", "#7ae03a", 1.500)}`,
  lwt: svg`${L("M1 5h30", "#bdbdbd", 2)}${L("M1 12h18", "#bdbdbd", 4)}${L("M1 19h30", "#bdbdbd", 3)}${L("M1 27h17", "#bdbdbd", 6)}`,
  cubes: svg`${L("M6 10l11-6 11 6v14l-11 6-11-6zM6 10l11 5 11-5M17 15v15", "#b5b5b5", 2)}${R(3, 3, 8, 8, "#3f9a12", "#12300a")}`,
  ann1: svg`${person("#2f8ff0")}${C(24, 7, 4.500, "none", "#2f8ff0", 2)}`,
  ann2: svg`${person("#bdbdbd")}${L("M28 3l-6 7h5l-5 6", "#bdbdbd", 2)}`,
  ann3: person("#bdbdbd"),
  sgear: gear("#bdbdbd"),
  plus: L("M16 2v28M2 16h28", "#c9c9c9", 2.500),
  shapes: svg`${L("M2 2h12v12h-12z", "#b5b5b5", 2)}${C(24, 15, 6, "none", "#b5b5b5", 2)}${L("M14 20l7 11h-14z", "#b5b5b5", 2)}`,
  perf: svg`${C(16, 16, 15, "#1c5294", "#0f7be6", 3)}${L("M14 22l10-9", "#4fa5ff", 3)}`,
  clean: svg`${L("M1 4h30v24h-30z", "#bdbdbd", 2)}${A(18, 15, 26, 8, "#ddd", false, 8)}${A(14, 17, 6, 24, "#ddd", false, 8)}`,
  burger: L("M1 5h30M1 12h30M1 20h30M1 27h30", "#c9c9c9", 2.500),
};

const ico = (name: string, size = 32) =>
  html`<svg class="i s${size}" viewBox="0 0 32 32" aria-hidden="true">${I[name]}</svg>`;
const ib = (name: string, size = 30, cls = "") =>
  html`<button class="ib ${cls}" aria-label=${name}>${ico(name, size)}</button>`;
const caret = (cls = "") => html`<span class="car ${cls}"></span>`;

const MENUS = ["文件(F)", "编辑(E)", "视图(V)", "插入(I)", "格式(O)", "工具(T)", "绘图(D)", "标注(N)", "修改(M)", "窗口(W)", "帮助(H)", "参数(P)"];
const RTABS = ["常用", "实体", "曲面", "网格", "可视化", "参数化", "插入", "注释", "视图", "管理", "输出", "附加模块", "A360", "精选应用", "BIM 360", "Performance"];
const DIMS = ["lindim", "aligned", "arclen", "ordinate", "|", "radius", "jogged", "diameter", "angular", "|", "qdim", "baseline", "contdim", "dimspace", "dimbreak", "|", "tol", "center", "inspect", "jogline", "|", "dimedit", "dimtext", "dimupd", "|", "dimstyle"];
const DRAW = ["line", "xline", "pline", "polygon", "rect", "arc", "circle", "cloud", "spline", "ellipse", "ellipse2", "copyblk", "block", "point", "hatch", "gradient", "region", "table", "mtext", "addsel"];
const MODIFY = ["brush", "copy", "mirror", "offset2", "array", "move", "rotate", "scale", "stretch", "trim", "extend", "breakpt", "brk", "join", "chamfer", "fillet", "blend", "explode"];
const SUGGEST: [string, string][] = [
  ["circle", "C (CIRCLE)"], ["prop", "CH (PROPERTIES)"], ["copylite", "CO (COPY)"], ["geardark", "CLAYER"],
  ["close", "CLOSE"], ["splinedots", "CONTOUR (SPLINE)"], ["prop", "CHPROP"],
];
const HISTORY = ["指定下一点或 [闭合(C)/放弃(U)] ", "命令: 指定对角点或 [栏选(F)/圈围(WP)/圈交(CP)]:", "命令: *取消*"];

@customElement("app-root")
export class AppRoot extends LitElement {
  @state() private ribbonTab = 0;
  @state() private selected = 0;

  static styles = css`
    :host { display: block; font: 18px/24px "Noto Sans", "Noto Sans CJK SC", sans-serif; color: #e6e6e6; }
    * { box-sizing: border-box; }
    button, input, select { font: inherit; color: inherit; background: none; border: 0; padding: 0; margin: 0; }
    button { cursor: pointer; white-space: nowrap; }
    select { appearance: none; flex: 1; min-width: 0; text-overflow: clip; }
    option { color: #000; }
    .defs { position: absolute; width: 0; height: 0; }
    .app { height: 100vh; display: flex; flex-direction: column; background: #5c5c5c; overflow: hidden; border-left: 2px solid #8b8b8b; position: relative; }
    .i { display: block; flex: none; overflow: visible; }
    .s18 { width: 18px; height: 18px; } .s24 { width: 24px; height: 24px; } .s26 { width: 26px; height: 26px; }
    .s30 { width: 30px; height: 30px; } .s48 { width: 48px; height: 48px; }
    .ib { display: flex; align-items: center; justify-content: center; position: relative; }
    .fly::after { content: ""; position: absolute; right: 2px; bottom: 1px; border-left: 5px solid transparent; border-bottom: 5px solid #000; }
    .car { display: inline-block; border: 4px solid transparent; border-top: 5px solid #fff; border-bottom: 0; flex: none; }
    .car.lg { border-width: 7px 6px 0; }
    .car.md { border-width: 6px 5px 0; }

    /* title bar */
    .title { display: flex; background: #fff; height: 45px; flex: none; padding: 9px 0 0 61px; color: #000; }
    .strip { display: flex; align-items: center; background: linear-gradient(#a8a8a8, #838383); border: 1px solid #6a6a6a; border-bottom: 0; color: #fff; }
    .qat .ib { width: 36px; height: 34px; }
    .qat { padding-left: 7px; }
    .qat .drop { display: flex; width: 16px; justify-content: center; }
    .qat .ib.nar { width: 28px; }
    .combo { display: flex; align-items: center; gap: 6px; background: linear-gradient(#565656, #6c6c6c); border: 2px solid #383838; padding: 0 4px; height: 32px; color: #f2f2f2; }
    .ws { width: 268px; margin-left: 3px; background: #585858; }
    .doc { flex: 1; display: flex; justify-content: center; align-items: center; gap: 30px; font-size: 19px; padding-bottom: 6px; white-space: nowrap; }
    .info .play { width: 20px; display: flex; justify-content: center; }
    .play i { border: 6px solid transparent; border-left: 7px solid #fff; border-right: 0; }
    .search { width: 270px; height: 32px; background: #6d6d6d; border: 2px solid #3a3a3a; padding: 0 4px; font-style: italic; }
    .search::placeholder { color: #b4b4b4; opacity: 1; }
    .info .ib { width: 36px; }
    .login { width: 128px; text-align: left; }
    .vsep { width: 1px; height: 26px; background: #a8a8a8; margin: 0 16px; }
    .win { width: 269px; display: flex; justify-content: flex-end; gap: 38px; padding: 0 18px 8px 0; align-items: center; }
    .win svg { width: 32px; height: 20px; display: block; }
    .appbtn { position: absolute; left: 10px; top: 19px; width: 42px; height: 41px; border: 2px solid #111; background: linear-gradient(#c4c4c4, #777); z-index: 3; display: flex; }
    .appbtn svg { width: 38px; height: 37px; }

    /* menu bar */
    .menu { display: flex; align-items: center; height: 33px; flex: none; padding: 0 10px 2px 77px; gap: 32px; background: linear-gradient(#adadad, #4e4e4e); border-top: 1px solid #333; border-bottom: 2px solid #2a2a2a; color: #fff; }
    .mdi { margin-left: auto; display: flex; gap: 8px; }
    .mdi svg { width: 16px; height: 18px; display: block; }

    /* ribbon */
    .rtabs { display: flex; height: 30px; flex: none; padding: 3px 0 0 7px; background: #525252; border-bottom: 2px solid #333; align-items: stretch; }
    .rtab { padding: 0 14px 1px; color: #cfcfcf; border: 1px solid transparent; border-bottom: 0; line-height: 23px; }
    .rtab.on { background: linear-gradient(#6e6e6e, #5c5c5c); border-color: #383838; color: #fff; border-radius: 3px 3px 0 0; margin-right: 3px; }
    .rmin { margin-left: 31px; display: flex; align-items: center; gap: 7px; }
    .rmin b { width: 20px; height: 11px; background: #dcdcdc; border-radius: 2px; display: flex; align-items: center; justify-content: center; }
    .rmin b::after { content: ""; border: 4px solid transparent; border-bottom: 5px solid #333; border-top: 0; }
    .ribbon { display: flex; flex: none; padding: 0 16px 0 2px; height: 149px; border-bottom: 3px solid #8a8a8a; background: #474747; }
    .panel { display: flex; flex-direction: column; flex: 1 1 0; min-width: 0; background: #5b5b5b; border-right: 2px solid #454545; border-left: 1px solid #666; }
    .pb { display: flex; height: 118px; padding-top: 5px; flex: none; }
    .pt { display: flex; align-items: center; justify-content: center; gap: 9px; flex: 1; background: linear-gradient(#4c4c4c, #424242); margin-left: 1px; color: #f0f0f0; white-space: nowrap; }
    .pt .ln { width: 10px; height: 10px; flex: none; }
    .pt .far { margin-left: auto; margin-right: 4px; }
    .pt .lead { margin-left: auto; }
    .big { display: flex; flex-direction: column; align-items: center; padding-top: 4px; height: 107px; }
    .big .i { margin-bottom: 6px; }
    .big > .car { margin-top: 4px; }
    .w80 { width: 78px; } .w64 { width: 64px; } .w56 { width: 56px; } .w104 { width: 104px; } .w88 { width: 88px; } .full { flex: 1; }
    .big.act { background: linear-gradient(#7f9dc9 0%, #7391c0 60%, #56709c 61%, #5a719b 100%); border: 2px solid #2e4a78; padding-top: 2px; }
    .two { display: flex; align-items: center; gap: 4px; padding-left: 12px; }
    .col { display: flex; flex-direction: column; }
    .col .ib { height: 36px; width: 34px; }
    .row { display: flex; align-items: center; gap: 7px; height: 36px; }
    .g { display: grid; grid-auto-rows: 36px; place-items: center; margin-left: 2px; }
    .g4 { grid-template-columns: 39px 39px 38px 18px; }
    .g6 { grid-template-columns: repeat(5, 39px) 16px; margin-left: 0; }
    .gu { grid-template-columns: 38px 18px repeat(4, 38px); }
    .span4 { grid-column: span 4; width: 150px; }
    .views { flex: 1; min-width: 0; display: flex; flex-direction: column; padding: 0 3px; }
    .views .combo { margin: 2px 0; }
    .layers { flex: 1; min-width: 0; padding-right: 4px; margin-left: -2px; }
    .layers .combo { margin: 2px 0; gap: 4px; }
    .layers .row { gap: 0; }
    .layers .row .ib { width: 36px; }
    .black { width: 21px; height: 20px; background: #000; margin: 0 4px; }
    .col .sel { width: 36px; height: 34px; background: #55709f; border: 2px solid #2e4a78; margin-left: -1px; }

    /* document tabs */
    .ftabs { display: flex; flex: none; height: 37px; padding: 4px 0 0 26px; background: #373737; border-bottom: 2px solid #555; }
    .ftab { position: relative; width: 196px; height: 31px; margin-right: -11px; text-align: left; padding-left: 22px; color: #b5b5b5; display: flex; align-items: center; }
    .ftab.on { color: #fff; }
    .ftab > svg.bg { position: absolute; inset: 0; width: 100%; height: 100%; }
    .ftab span { position: relative; flex: 1; }
    .ftab .x { position: relative; width: 10px; height: 10px; margin-right: 24px; }
    .plus { position: relative; display: flex; align-items: center; justify-content: center; width: 33px; height: 22px; margin: 7px 0 0 16px; background: #5a5a5a; border-radius: 0 12px 3px 12px; }
    .plus svg { width: 12px; height: 12px; }
    .mtabs .plus { margin: 1px 0 0 10px; }

    /* toolbars */
    .bars { display: flex; flex: none; height: 48px; padding: 4px 0 3px; }
    .bar { display: flex; align-items: center; border: 1px solid #363636; padding-left: 7px; margin-right: 1px; background: #5f5f5f; position: relative; }
    .bar::before { content: ""; position: absolute; left: 3px; top: 3px; width: 4px; height: 13px; background: repeating-linear-gradient(#888 0 1px, #333 1px 2px); }
    .bar .ib { width: 39px; height: 38px; }
    .bsep { width: 1px; height: 34px; background: #9a9a9a; margin: 0 2px; }
    .wcombo { align-self: flex-start; background: #e1e1e1; height: 22px; color: #333; display: flex; align-items: center; gap: 6px; padding: 0 6px; border-bottom: 1px solid #999; font-size: 17px; line-height: 20px; font-family: "Liberation Serif", "Noto Sans CJK SC", serif; }
    .wcombo svg.v { width: 12px; height: 8px; }
    .c1 { width: 176px; } .c2 { width: 140px; }

    .main { flex: 1; display: flex; min-height: 0; }
    .side { display: flex; flex: none; gap: 3px; width: 89px; align-items: flex-start; }
    .vbar { width: 41px; border: 1px solid #363636; padding-top: 8px; position: relative; display: flex; flex-direction: column; align-items: center; }
    .vbar::before { content: ""; position: absolute; left: 4px; top: 3px; width: 14px; height: 4px; background: repeating-linear-gradient(90deg, #999 0 1px, #333 1px 2px); }
    .vbar .ib { width: 38px; height: 38px; }
    .hsep { width: 35px; height: 2px; background: #ececec; margin: 2px 0; }

    /* model space */
    .canvas { flex: 1; position: relative; background: #fff; color: #000; min-width: 0; overflow: hidden; }
    .geom { position: absolute; left: 0; top: 0; width: 100%; height: 100%; overflow: hidden; }
    .arrow { position: absolute; left: 0; top: 0; width: 100%; height: 100%; pointer-events: none; z-index: 4; }
    .vlabel { position: absolute; left: 4px; top: 4px; font-size: 13px; line-height: 18px; font-family: "Liberation Sans", "Noto Sans CJK SC", sans-serif; }
    .cubebox { position: absolute; right: 16px; top: 10px; width: 140px; height: 190px; }
    .cubebox svg { width: 140px; height: 190px; display: block; }
    .ucsicon { position: absolute; left: 14px; bottom: 3px; width: 84px; height: 90px; }
    .dyn { position: absolute; left: 1094px; top: 591px; width: 52px; height: 30px; border: 1px solid #222; background: #fff; padding: 0 4px; font-size: 20px; z-index: 2; }
    .cursor { position: absolute; left: 1111px; top: 593px; width: 1px; height: 25px; background: #000; z-index: 3; }
    .list { position: absolute; left: 1094px; top: 620px; width: 400px; border: 1px solid #777; background: #fff; display: flex; z-index: 2; font-size: 19px; }
    .list ul { list-style: none; margin: 0; padding: 0 0 0 1px; flex: 1; }
    .list li { display: flex; line-height: 26px; height: 26px; }
    .list li .i { margin: 1px 0 0 1px; }
    .list li span { flex: 1; padding-left: 2px; }
    .list li.on span { background: #0078d7; color: #fff; }
    .sb { width: 26px; background: #f0f0f0; display: flex; flex-direction: column; align-items: center; margin-left: 1px; }
    .sb svg { width: 14px; height: 26px; flex: none; }
    .thumb { width: 24px; height: 26px; background: #cdcdcd; margin-bottom: auto; }
    .cmd { position: absolute; left: 534px; right: 535px; bottom: 0; }
    .hist { display: flex; flex-direction: column; align-items: flex-start; gap: 8px; padding-left: 91px; margin-bottom: 4px; }
    .hist div { height: 36px; border-radius: 4px; padding: 0 3px; font-size: 31px; line-height: 34px; color: #fff; white-space: pre; background: linear-gradient(#7a7a7a, #666); }
    .hist div:nth-child(1) { background: linear-gradient(#a0a0a0, #8e8e8e); }
    .hist div:nth-child(2) { background: linear-gradient(#8c8c8c, #777); }
    .mono { font: 25px/34px "DejaVu Sans Mono", monospace; }
    .cline { display: flex; height: 42px; }
    .grip { width: 81px; background: linear-gradient(#999, #6c6c6c); border-radius: 4px 0 0 4px; display: flex; align-items: center; gap: 16px; padding-left: 12px; }
    .grip::before { content: ""; border-left: 1px dashed #ccc; height: 26px; margin-right: -6px; }
    .cbox { flex: 1; display: flex; align-items: center; gap: 5px; border: 2px solid #a0a0a0; border-radius: 4px; background: #fff; padding: 0 6px 0 5px; }
    .cbox input { flex: 1; font-size: 30px; font-style: italic; margin-left: 8px; height: 36px; min-width: 0; }
    .cbox input::placeholder { color: #b9b9b9; opacity: 1; }
    .cbox .car { border-top-color: #aaa; }
    .cbox .car.up { border: 5px solid transparent; border-bottom: 6px solid #555; border-top: 0; }
    .mark { position: absolute; right: 110px; bottom: 0; width: 410px; height: 195px; }

    /* bottom */
    .foot { flex: none; height: 45px; display: flex; background: #383838; border-bottom: 3px solid #555; }
    .mtabs { display: flex; padding-left: 13px; }
    .mtab { position: relative; width: 83px; height: 27px; color: #a9a9a9; margin-right: -1px; }
    .mtab.on { color: #fff; font-weight: 700; width: 77px; }
    .mtab svg { position: absolute; inset: 0; width: 100%; height: 100%; }
    .mtab span { position: relative; }
    .status { margin-left: auto; display: flex; gap: 2px; padding-top: 2px; border-top: 2px solid #666; background: #4c4c4c; }
    .cell { display: flex; align-items: center; border: 2px solid #7d7d7d; background: #505050; height: 38px; color: #fff; }
    .cell .ib { width: 36px; height: 34px; }
    .cell .drop { width: 22px; display: flex; justify-content: center; }
    .cell .sp { width: 2px; height: 34px; background: #7d7d7d; }
    .cell .txt { width: 40px; font-size: 17px; }
    .cell .ratio { width: 26px; font-size: 17px; }
    .w3 { width: 5px; }
  `;

  private panel(title: string, grow: number, body: TemplateResult, arrow = true, launch = false) {
    const ln = html`<svg class="ln ${arrow ? "" : "far"}" viewBox="0 0 10 10"><path d="M1 1l5 5M9 2v7h-7z" stroke="#fff" stroke-width="1.600" fill="#fff"/></svg>`;
    return html`<section class="panel" style="flex-grow:${grow}">
      <div class="pb">${body}</div>
      <div class="pt"><span class=${launch && !arrow ? "lead" : ""}>${title}</span>${arrow ? caret("lg") : nothing}${launch ? ln : nothing}</div>
    </section>`;
  }

  private big(icon: string, lines: string[], cls: string, drop = false) {
    return html`<button class="big ${cls}">${ico(icon, 48)}${lines.map((l) => html`<span>${l}</span>`)}${drop ? caret() : nothing}</button>`;
  }

  private grid(cls: string, items: string[]) {
    return html`<div class="g ${cls}">${items.map((n) => (n === "v" ? caret() : ib(n, 26)))}</div>`;
  }

  private ribbon() {
    return html`<div class="ribbon">
      ${this.panel("建模", 302, html`
        <span style="width:8px"></span>
        ${this.big("box", ["长方体"], "w80", true)}${this.big("extrude", ["拉伸"], "w80", true)}
        <div class="col"><button class="row">${ico("polysolid", 26)}多段体</button><button class="row">${ico("presspull", 26)}按住并拖动</button></div>`)}
      ${this.panel("网格", 102, html`${this.big("smooth", ["平滑", "对象"], "w64")}
        <div class="col">${["meshplus", "meshminus", "meshslash"].map((n) => ib(n, 26))}</div>`, false, true)}
      ${this.panel("实体编辑", 142, this.grid("g4", ["union", "extrudeface", "wirebox", "v", "subtract", "slice", "upbox", "v", "intersect", "sep", "mirror3", "v"]))}
      ${this.panel("绘图", 143, this.grid("g4", ["pline", "helix", "arc", "v", "spline", "line", "circle", "v", "polygon", "rect", "ellipsec", "v"]))}
      ${this.panel("修改", 217, this.grid("g6", ["align3", "gizmo", "move", "copy", "trim", "v", "solidL", "gizmorot", "rotate", "stretch", "fillet", "v", "brush", "gizmoscale", "scale", "offset", "array", "v"]))}
      ${this.panel("截面", 92, this.big("section", ["截面", "平面"], "full"), true, true)}
      ${this.panel("坐标", 218, html`<div class="g gu">
        ${ib("ucsnew", 26)}${caret()}${["ucsprop", "ucs", "ucstable", "ucsglobe"].map((n) => ib(n, 26))}
        ${ib("ucsx", 26)}${caret()}${["ucsback", "ucsorig", "ucsz", "ucs3"].map((n) => ib(n, 26))}
        ${ib("ucsview", 26)}${caret()}
        <label class="combo span4">${ico("ucsglobe", 24)}<select aria-label="UCS"><option>世界</option></select>${caret("lg")}</label></div>`, false, true)}
      ${this.panel("视图", 159, html`<div class="views">
        <label class="combo">${ico("wire", 24)}<select aria-label="视觉样式"><option>二维线框</option></select>${caret("lg")}</label>
        <label class="combo">${ico("saved", 24)}<select aria-label="视图"><option>未保存的视图</option></select>${caret("lg")}</label>
        <div class="row">${ib("viewcube", 26)}${caret()}</div></div>`)}
      ${this.panel("选择", 254, html`${this.big("cull", ["剔除"], "w56 act")}${this.big("nofilter", ["无过滤器"], "w104", true)}
        <button class="big w88">${ico("movegiz", 48)}<span class="two"><span>移动<br>小控件</span>${caret()}</span></button>`, false)}
      ${this.panel("图层", 379, html`${this.big("layerprop", ["图层", "特性"], "w64")}
        <div class="layers"><label class="combo">${ico("bulb", 24)}${ico("sun", 24)}${ico("lock", 24)}<span class="black"></span><select aria-label="图层"><option>0</option></select>${caret("lg")}</label>
          <div class="row">${["layoff", "layiso", "layfrz", "laylck", "laycur"].map((n) => ib(n, 26))}<button>置为当前</button></div>
          <div class="row">${["layon", "layuniso", "laythw", "layulk", "laymch"].map((n) => ib(n, 26))}<button>匹配图层</button></div></div>`)}
      ${this.panel("组", 102, html`${this.big("group", ["组"], "w64")}
        <div class="col">${ib("grpedit", 26)}${ib("ungroup", 26)}<button class="ib sel" aria-label="组选择">${ico("grpsel", 26)}</button></div>`)}
      ${this.panel("视图", 90, this.big("base", ["基点"], "full", true), true, true)}
    </div>`;
  }

  private fileTab(name: string, on: boolean) {
    return html`<button class="ftab ${on ? "on" : ""}"><svg class="bg" viewBox="0 0 196 31" preserveAspectRatio="none">
        <path d="M0 31C14 31 8 0 24 0H176C190 0 184 31 196 31Z" fill=${on ? "url(#gtab)" : "#515151"} stroke="#6f6f6f" stroke-width="1"/></svg>
      <span>${name}</span>${on ? html`<svg class="x" viewBox="0 0 10 10"><path d="M1 1l8 8M9 1l-8 8" stroke="#454545" stroke-width="2.500"/></svg>` : nothing}</button>`;
  }

  private modelTab(name: string, on: boolean) {
    return html`<button class="mtab ${on ? "on" : ""}"><svg viewBox="0 0 82 27" preserveAspectRatio="none">
      <path d="M0 0C10 2 8 26 20 26H64C74 26 70 2 82 0Z" fill=${on ? "url(#gmt)" : "#4a4a4a"} stroke="#5e5e5e"/></svg><span>${name}</span></button>`;
  }

  private defs() {
    return html`<svg class="defs" aria-hidden="true"><defs>
      <linearGradient id="gw" x1="0" y1="0" x2="0" y2="1"><stop offset="0" stop-color="#ffffff"/><stop offset="1" stop-color="#b9bfca"/></linearGradient>
      <linearGradient id="gb" x1="0" y1="0" x2="0" y2="1"><stop offset="0" stop-color="#c9e0f9"/><stop offset="1" stop-color="#6f9edc"/></linearGradient>
      <linearGradient id="gtab" x1="0" y1="0" x2="0" y2="1"><stop offset="0" stop-color="#858585"/><stop offset="1" stop-color="#606060"/></linearGradient>
      <linearGradient id="gmt" x1="0" y1="0" x2="0" y2="1"><stop offset="0" stop-color="#5c5c5c"/><stop offset="1" stop-color="#858585"/></linearGradient>
      <radialGradient id="gs" cx=".35" cy=".3" r=".8"><stop offset="0" stop-color="#b9d8fb"/><stop offset=".4" stop-color="#3d82d8"/><stop offset="1" stop-color="#1c4f9c"/></radialGradient>
      <radialGradient id="gc" cx=".35" cy=".3" r=".8"><stop offset="0" stop-color="#ffd21e"/><stop offset=".45" stop-color="#c07a4e"/><stop offset=".8" stop-color="#5a5f96"/><stop offset="1" stop-color="#5070b0"/></radialGradient>
      <pattern id="gh" width="3" height="3" patternUnits="userSpaceOnUse"><rect width="3" height="3" fill="#e4effc"/><path d="M0 0l3 3" stroke="#5d9ae8" stroke-width="1"/></pattern>
    </defs></svg>`;
  }

  private titleBar() {
    return html`<header class="title">
      <div class="strip qat">${["new", "open", "save", "saveas", "plot"].map((n) => ib(n, 24))}
        ${ib("undo", 24)}<span class="drop">${caret()}</span>${ib("redo", 24)}<span class="drop">${caret()}</span>
        <label class="combo ws">${ico("gear", 24)}<select aria-label="工作空间"><option>11</option></select>${caret("lg")}</label>
        ${["sheetset", "publish", "preview", "teapot", "match", "prop"].map((n) => ib(n, 24))}
        <button class="ib nar" aria-label="自定义"><svg width="12" height="12" viewBox="0 0 12 12"><path d="M0 1h12" stroke="#fff" stroke-width="2"/><path d="M0 4h12l-6 7z" fill="#fff"/></svg></button></div>
      <div class="doc"><span>Autodesk AutoCAD 2017</span><span>Drawing1.dwg</span></div>
      <div class="strip info"><span class="play"><i></i></span><input class="search" aria-label="搜索" placeholder="键入关键字或短语">
        ${ib("binoc", 24)}${ib("user", 24)}<button class="login">登录</button>${caret()}
        <span style="width:12px"></span>${ib("xch", 24)}${ib("a360", 26)}${caret()}<span class="vsep"></span>
        <svg width="12" height="10" viewBox="0 0 12 10"><path d="M0 0l5 5-5 5zM6 0l5 5-5 5z" fill="#111"/></svg><span style="width:9px"></span></div>
      <div class="win">
        <button aria-label="最小化"><svg viewBox="0 0 32 20"><path d="M9 9.500h15" stroke="#000"/></svg></button>
        <button aria-label="最大化"><svg viewBox="0 0 32 20"><path d="M8.500 2.500h14v14h-14z" stroke="#000" fill="none"/></svg></button>
        <button aria-label="关闭"><svg viewBox="0 0 32 20"><path d="M8 2l15 15M23 2l-15 15" stroke="#000" stroke-width="1.200"/></svg></button></div>
    </header>
    <button class="appbtn" aria-label="应用程序菜单"><svg viewBox="0 0 38 37"><path d="M3 27L11 2h9l6 25h-6l-2-7h-6l-3 7z" fill="#b92d17" stroke="#7c1a0a"/><path d="M13 15l2-8 2 8z" fill="#e6b7a8"/><path d="M3 27l4-8 4 2-2 6zM20 27l-2-7 6-2 2 9z" fill="#e2512f"/><path d="M29 18h8l-4 5z" fill="#222"/></svg></button>`;
  }

  private toolbars() {
    const v = html`<svg class="v" viewBox="0 0 12 8"><path d="M1 1l5 5 5-5" fill="none" stroke="#444" stroke-width="1.500"/></svg>`;
    return html`<div class="bars">
      <div class="bar">${ib("swivel")}${ib("spheres")}${ib("spheres2")}</div>
      <div class="bar">${ib("ucsbar")}${ib("ucspanel")}<span class="bsep"></span>
        <label class="wcombo c1">${ico("worldgray", 18)}<select aria-label="UCS"><option>世界</option></select>${v}</label></div>
      <div class="bar">${["mdist", "mrad", "mang", "marea", "mvol"].map((n) => ib(n))}</div>
      <div class="bar">${ib("pan")}${ib("zoom")}${ib("swivel", 30, "fly")}${ib("camera", 30, "fly")}${ib("walk", 30, "fly")}<span class="bsep"></span>
        <label class="wcombo c2"><select aria-label="视图"><option></option></select>${v}</label></div>
      <div class="bar">${ib("v2d")}<span class="bsep"></span>${["vwire", "vhide", "vreal", "vconc"].map((n) => ib(n))}<span class="bsep"></span>${ib("vman")}</div>
      <div class="bar">${MODIFY.map((n) => ib(n, 30, n === "array" ? "fly" : ""))}</div>
    </div>`;
  }

  private vbar(items: string[]) {
    return html`<div class="vbar">${items.map((n) => (n === "|" ? html`<span class="hsep"></span>` : ib(n, 30, n === "copyblk" ? "fly" : "")))}</div>`;
  }

  private canvas() {
    return html`<main class="canvas">
      <svg class="geom"><g fill="none" stroke="#111" stroke-width="1">
        <path d="M689.500 187v391.500h135v-311"/><path d="M1070.500 510v53M1070.500 570v53M1014 566.500h53M1074 566.500h53"/><rect x="1067.500" y="563.500" width="6" height="6"/></g></svg>
      <span class="vlabel">[−][俯视][二维线框]</span>
      <div class="cubebox"><svg viewBox="0 0 140 190">
        <circle cx="73" cy="72" r="54" fill="none" stroke="#fbfbfb" stroke-width="13"/>
        <rect x="47.500" y="46.500" width="51" height="51" fill="#eff1f1" stroke="#9b9b9b"/><rect x="57" y="56" width="32" height="32" fill="#e2e4e9"/>
        <text x="73" y="83" font-size="30" text-anchor="middle" fill="#9a9a9a">上</text>
        <g font-size="19" font-weight="700" fill="#d4d5d8" stroke="#8f8f8f" stroke-width=".600" text-anchor="middle"><text x="73" y="23">北</text><text x="17" y="79">西</text><text x="129" y="79">东</text><text x="73" y="136">南</text></g>
        <rect x="50" y="160" width="47" height="16" rx="4" fill="#e9ecf2"/><text x="54" y="172" font-size="11" font-family="Liberation Sans" fill="#777">WCS</text><path d="M84 166h8l-4 4z" fill="none" stroke="#aab0c4"/></svg></div>
      <svg class="ucsicon" viewBox="0 0 84 90"><path d="M8.500 20v50.500h51M4.500 65.500h9v9h-9z" fill="none" stroke="#111" stroke-width="1.200"/>
        <g font-family="Liberation Sans, sans-serif" font-size="19" fill="#111"><text x="10" y="16">Y</text><text x="63" y="69">X</text></g></svg>
      <svg class="mark" viewBox="0 0 410 195"><g fill="#fff" stroke="#d6d6d6" stroke-width="2">
        <ellipse cx="151" cy="52" rx="16" ry="20"/><ellipse cx="179" cy="25" rx="15" ry="21"/><ellipse cx="215" cy="27" rx="16" ry="20" transform="rotate(12 215 27)"/><ellipse cx="237" cy="61" rx="16" ry="20"/>
        <path d="M193 54c18 0 20 18 30 28 30 18 26 46 2 48-12 1-20-4-32-4s-20 5-32 4c-24-2-28-30 2-48 10-10 12-28 30-28z"/>
        <g font-weight="700"><text x="-1" y="127" font-size="88" font-family="Liberation Sans">Bai</text><text x="161" y="118" font-size="56" font-weight="400" font-family="Liberation Sans">du</text>
        <text x="256" y="122" font-size="68" font-family="Noto Sans CJK SC" font-weight="900">经验</text></g>
        <text x="5" y="180" font-size="45" stroke-width="1.500">jingyan.baidu.com</text></g></svg>
      <div class="cmd">
        <div class="hist">${HISTORY.map((t) => html`<div>${t.split(/([\x20-\x7e]+)/).map((p) => (/^[\x20-\x7e]/.test(p) ? html`<span class="mono">${p}</span>` : p))}</div>`)}</div>
        <div class="cline"><div class="grip"><button aria-label="关闭"><svg width="14" height="14" viewBox="0 0 14 14"><path d="M2 2l10 10M12 2l-10 10" stroke="#fff" stroke-width="2.500"/></svg></button>
          <button aria-label="自定义"><svg width="22" height="22" viewBox="0 0 22 22"><path d="M6 7l12 13" stroke="#eee" stroke-width="4.500"/><path d="M2 7a5 5 0 1 0 4-5l3 3-2 4z" fill="#eee"/></svg></button></div>
          <div class="cbox"><svg width="22" height="22" viewBox="0 0 22 22"><rect x="1" y="1" width="20" height="20" rx="2" fill="#eef0f4" stroke="#b9bcc4"/><path d="M5 6l5 5-5 5M12 16h6" fill="none" stroke="#777" stroke-width="1.800"/></svg>${caret()}
          <input aria-label="命令" placeholder="键入命令">${caret("up")}</div></div>
      </div>
      <input class="dyn" aria-label="动态输入" value="C"><span class="cursor"></span>
      <div class="list"><ul role="listbox" aria-label="命令建议">${SUGGEST.map(([i, t], k) => html`<li role="option" aria-selected=${k === this.selected} class=${classMap({ on: k === this.selected })} @click=${() => (this.selected = k)}>${ico(i, 18)}<span>${t}</span></li>`)}</ul>
        <div class="sb"><svg viewBox="0 0 14 26"><path d="M2 17l5-5 5 5" fill="none" stroke="#555" stroke-width="2.500"/></svg><div class="thumb"></div><svg viewBox="0 0 14 26"><path d="M2 10l5 5 5-5" fill="none" stroke="#555" stroke-width="2.500"/></svg></div></div>
      <svg class="arrow"><path d="M882 369L883 368Q1000 452 1156 588L1160 583L1173 609L1146 602L1148 597Z" fill="#fb3a38"/></svg>
    </main>`;
  }

  private status() {
    const d = html`<button class="drop" aria-label="展开">${caret("md")}</button>`;
    const b = (n: string) => ib(n, 24);
    return html`<div class="status">
      <div class="cell"><button class="txt">模型</button></div>
      <div class="cell">${b("grid")}${b("snap")}${d}</div>
      <div class="cell">${b("ortho")}${b("polar")}${d}${b("iso")}${d}<span class="sp"></span>${b("otrack")}${b("osnap")}${d}<span class="sp"></span>${b("lwt")}<span class="sp"></span>${b("cubes")}${d}</div>
      <div class="cell">${b("ann1")}${b("ann2")}${b("ann3")}<button class="ratio">1:1</button>${d}</div>
      <div class="cell">${b("sgear")}${d}<span class="sp"></span>${b("plus")}</div>
      <div class="cell">${b("shapes")}</div><div class="cell">${b("perf")}</div><div class="cell w3"></div>
      <div class="cell">${b("clean")}${b("burger")}</div>
    </div>`;
  }

  render() {
    return html`${this.defs()}<div class="app">
      ${this.titleBar()}
      <nav class="menu">${MENUS.map((m) => html`<button>${m}</button>`)}
        <div class="mdi"><button aria-label="最小化"><svg viewBox="0 0 16 18"><path d="M1 12h14v3h-14z" fill="#333"/></svg></button>
          <button aria-label="还原"><svg viewBox="0 0 16 18"><path d="M5 5v-3h10v10h-4M1 7h10v9h-10z" fill="none" stroke="#333" stroke-width="2"/></svg></button>
          <button aria-label="关闭"><svg viewBox="0 0 16 18"><path d="M2 3l12 12M14 3l-12 12" stroke="#222" stroke-width="3.500"/></svg></button></div></nav>
      <div class="rtabs">${RTABS.map((t, k) => html`<button class=${classMap({ rtab: true, on: k === this.ribbonTab })} @click=${() => (this.ribbonTab = k)}>${t}</button>`)}
        <button class="rmin" aria-label="最小化功能区"><b></b>${caret()}</button></div>
      ${this.ribbon()}
      <div class="ftabs">${this.fileTab("开始", false)}${this.fileTab("Drawing1*", true)}
        <button class="plus" aria-label="新图形"><svg viewBox="0 0 12 12"><path d="M6 0v12M0 6h12" stroke="#c9c9c9" stroke-width="3"/></svg></button></div>
      ${this.toolbars()}
      <div class="main"><aside class="side">${this.vbar(DIMS)}${this.vbar(DRAW)}</aside>${this.canvas()}</div>
      <footer class="foot"><div class="mtabs">${this.modelTab("模型", true)}${this.modelTab("布局1", false)}${this.modelTab("布局2", false)}
        <button class="plus" aria-label="新布局"><svg viewBox="0 0 12 12"><path d="M6 0v12M0 6h12" stroke="#aaa" stroke-width="2.500"/></svg></button></div>
        ${this.status()}</footer>
    </div>`;
  }
}
